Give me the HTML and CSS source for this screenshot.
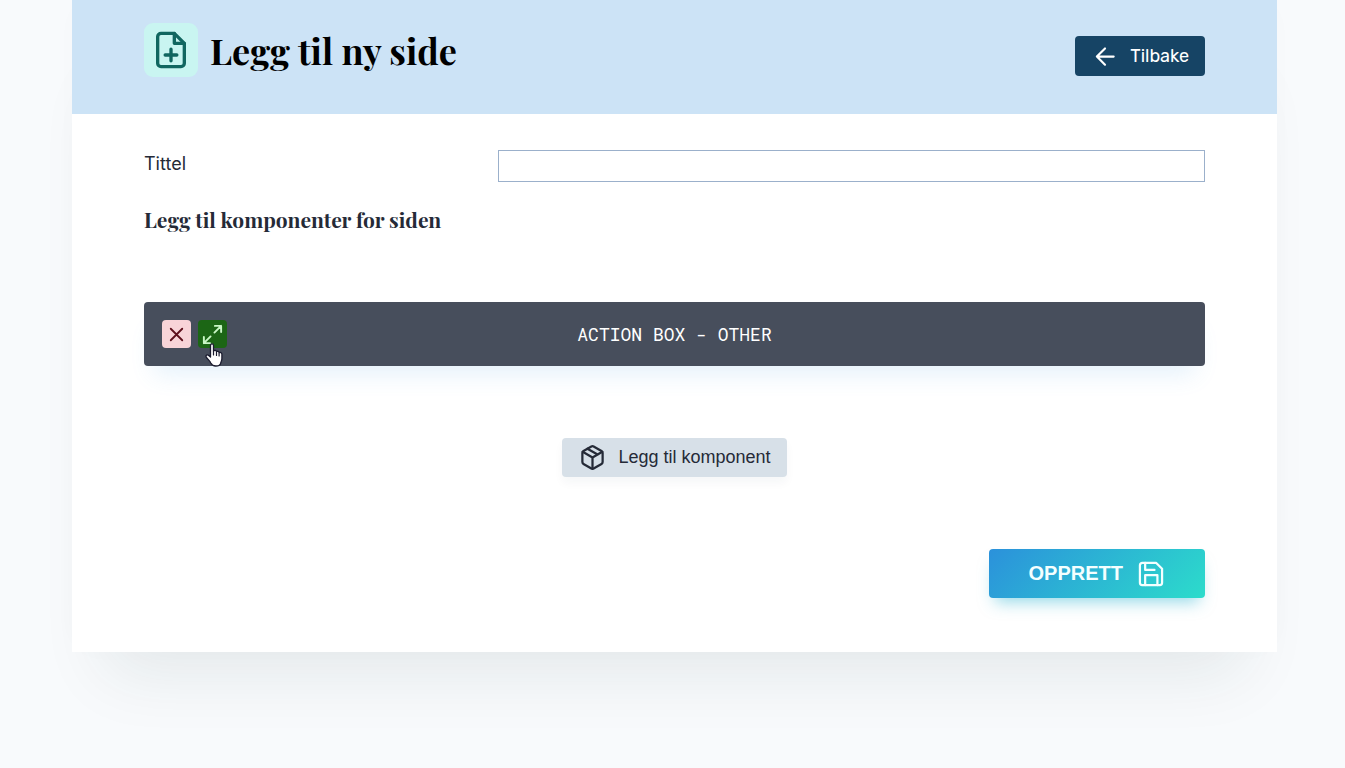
FILE: index.html
```html
<!DOCTYPE html>
<html lang="no">
<head>
<meta charset="utf-8">
<title>Legg til ny side</title>
<link rel="stylesheet" href="styles.css">
</head>
<body>
<main class="panel">
  <header class="panel-header">
    <div class="brand">
      <span class="brand-icon">
        <svg viewBox="0 0 24 24" width="40" height="40" fill="none" stroke="currentColor" stroke-width="2" stroke-linecap="round" stroke-linejoin="round" aria-hidden="true"><path d="M14 2H6a2 2 0 0 0-2 2v16a2 2 0 0 0 2 2h12a2 2 0 0 0 2-2V8z"/><path d="M14 2v6h6M12 11.500v7M8.500 15h7"/></svg>
      </span>
      <h1 class="title">Legg til ny side</h1>
    </div>
    <a class="back" href="#">
      <svg viewBox="0 0 24 24" width="26" height="26" fill="none" stroke="currentColor" stroke-width="2" stroke-linecap="round" stroke-linejoin="round" aria-hidden="true"><path d="M20 12.500H4.500M12 5l-7.500 7.500 7.500 7.500"/></svg>
      <span>Tilbake</span>
    </a>
  </header>
  <form class="panel-body">
    <div class="field">
      <label class="field-label" for="title">Tittel</label>
      <input class="field-input" id="title" type="text">
    </div>
    <h2 class="subtitle">Legg til komponenter for siden</h2>
    <section class="component">
      <div class="tools">
        <button class="tool remove" type="button" aria-label="Fjern">
          <svg viewBox="0 0 24 24" width="23" height="23" fill="none" stroke="currentColor" stroke-width="1.900" stroke-linecap="round" aria-hidden="true"><path d="M6 6l12 12M18 6L6 18"/></svg>
        </button>
        <button class="tool expand" type="button" aria-label="Utvid">
          <svg viewBox="0 0 24 24" width="23" height="23" fill="none" stroke="currentColor" stroke-width="2" stroke-linecap="round" stroke-linejoin="round" aria-hidden="true"><path d="M14.500 3H21v6.500M21 3l-7 7M9.500 21H3v-6.500M3 21l7-7"/></svg>
          <svg class="cursor" viewBox="0 0 18 24" width="18" height="24" aria-hidden="true"><path d="M5.500 14V2.500C5.500.2 8.500.2 8.500 2.500V8c1-1.200 2.800-.6 3 .6 1-.8 2.500-.2 2.600 1 1.200-.7 2.800.1 2.800 1.700v4.200c0 2.500-1 3.500-1.400 5.200C15 22.300 13.400 23 10.800 23 8 23 6.800 22.200 5.800 20 5 18 3.300 16.800 1.500 14.500c-1.300-1.700.2-3.200 1.700-2.300.8.4 1.500 1 2.300 1.800z" fill="#fff" stroke="#1a1b2e" stroke-width="1.300" stroke-linejoin="round"/><path d="M8.500 8v4M11.500 9v3.500M14.100 10v3" stroke="#1a1b2e" stroke-width="1.200" stroke-linecap="round"/></svg>
        </button>
      </div>
      <span class="component-name">ACTION BOX - OTHER</span>
    </section>
    <button class="add" type="button">
      <svg viewBox="0 0 24 24" width="27" height="27" fill="none" stroke="currentColor" stroke-width="2" stroke-linecap="round" stroke-linejoin="round" aria-hidden="true"><path d="M21 16V8a2 2 0 0 0-1-1.730l-7-4a2 2 0 0 0-2 0l-7 4A2 2 0 0 0 3 8v8a2 2 0 0 0 1 1.730l7 4a2 2 0 0 0 2 0l7-4A2 2 0 0 0 21 16z"/><path d="M3.270 6.960L12 12.010l8.730-5.050M12 22.080V12M7.500 4.210l9 5.190"/></svg>
      <span>Legg til komponent</span>
    </button>
    <button class="submit" type="submit">
      <span>OPPRETT</span>
      <svg viewBox="0 0 24 24" width="28" height="28" fill="none" stroke="currentColor" stroke-width="1.900" stroke-linecap="round" stroke-linejoin="round" aria-hidden="true"><path d="M19.500 21.500h-15a2 2 0 0 1-2-2v-15a2 2 0 0 1 2-2h12l5 5v12a2 2 0 0 1-2 2z"/><path d="M17.500 21.500v-8.500H7v8.500M7 2.500v6h8"/></svg>
    </button>
  </form>
</main>
</body>
</html>
```
FILE: styles.css
```css
* {
  box-sizing: border-box;
}

html {
  background: #f8fafc;
}

body {
  display: flow-root;
  min-height: 100vh;
  margin: 0;
  color: #252a37;
  font: 18px/27px "Liberation Sans", Arial, sans-serif;
}

.panel {
  margin: 0 68px 0 72px;
  background: #fff;
  box-shadow: 0 54px 64px -34px rgba(20, 50, 50, 0.09), 0 0 36px rgba(20, 50, 80, 0.01);
}

.panel-header {
  display: flex;
  justify-content: space-between;
  align-items: center;
  padding: 23px 72px 37px;
  background: #cce3f6;
}

.brand {
  display: flex;
  align-items: center;
  gap: 12px;
}

.brand-icon {
  display: grid;
  place-items: center;
  width: 54px;
  height: 54px;
  border-radius: 9px;
  background: #c9f5f1;
  color: #116660;
}

.title {
  margin: 0;
  color: #000;
  font: bold 36px/54px "Playfair Display", "Liberation Serif", serif;
}

.back {
  display: flex;
  align-items: center;
  gap: 12px;
  height: 40px;
  margin-top: 12px;
  padding: 0 16px 0 17px;
  border-radius: 4px;
  background: #164465;
  color: #fff;
  font-family: Rubik, Roboto, sans-serif;
  text-decoration: none;
}

.panel-body {
  display: flex;
  flex-direction: column;
  padding: 36px 72px 54px;
}

.field {
  display: grid;
  grid-template-columns: 1fr 2fr;
}

.field-label {
  font-family: Inter, sans-serif;
}

.field-input {
  width: 100%;
  height: 32px;
  padding: 0 8px;
  border: 1px solid #9bb0cb;
  background: #fff;
  font: inherit;
}

.subtitle {
  margin: 24px 0 0;
  font: bold 21px/27px "Playfair Display", "Liberation Serif", serif;
}

.component {
  display: grid;
  grid-template-columns: 1fr auto 1fr;
  align-items: center;
  height: 64px;
  margin-top: 69px;
  padding: 0 18px;
  border-radius: 4px;
  background: #474e5c;
  box-shadow: 0 18px 24px -10px rgba(66, 153, 225, 0.14);
}

.component-name {
  color: #fff;
  font: 18px/27px "Roboto Mono", "DejaVu Sans Mono", monospace;
}

.tools {
  display: flex;
  gap: 7px;
}

.tool {
  position: relative;
  display: grid;
  place-items: center;
  width: 29px;
  height: 28px;
  padding: 0;
  border: 0;
  border-radius: 4px;
}

.remove {
  background: #f8d4d8;
  color: #5e101c;
}

.expand {
  background: #1c6615;
  color: #c9f7c5;
}

.cursor {
  position: absolute;
  top: 23px;
  left: 7px;
}

.add {
  display: flex;
  align-items: center;
  align-self: center;
  gap: 12px;
  height: 39px;
  margin-top: 72px;
  padding: 0 16px 0 17px;
  border: 0;
  border-radius: 4px;
  background: #d7e0e8;
  color: #252a37;
  font: inherit;
  box-shadow: 0 6px 10px rgba(20, 50, 80, 0.04);
}

.submit {
  display: flex;
  align-items: center;
  align-self: flex-end;
  gap: 14px;
  height: 49px;
  margin-top: 72px;
  padding: 0 40px;
  border: 0;
  border-radius: 4px;
  background: linear-gradient(135deg, #2b91db, #2cdccb);
  color: #f4ffff;
  font: bold 20px/27px "Liberation Sans", Arial, sans-serif;
  box-shadow: 0 10px 16px -6px rgba(43, 180, 210, 0.5);
}
```
